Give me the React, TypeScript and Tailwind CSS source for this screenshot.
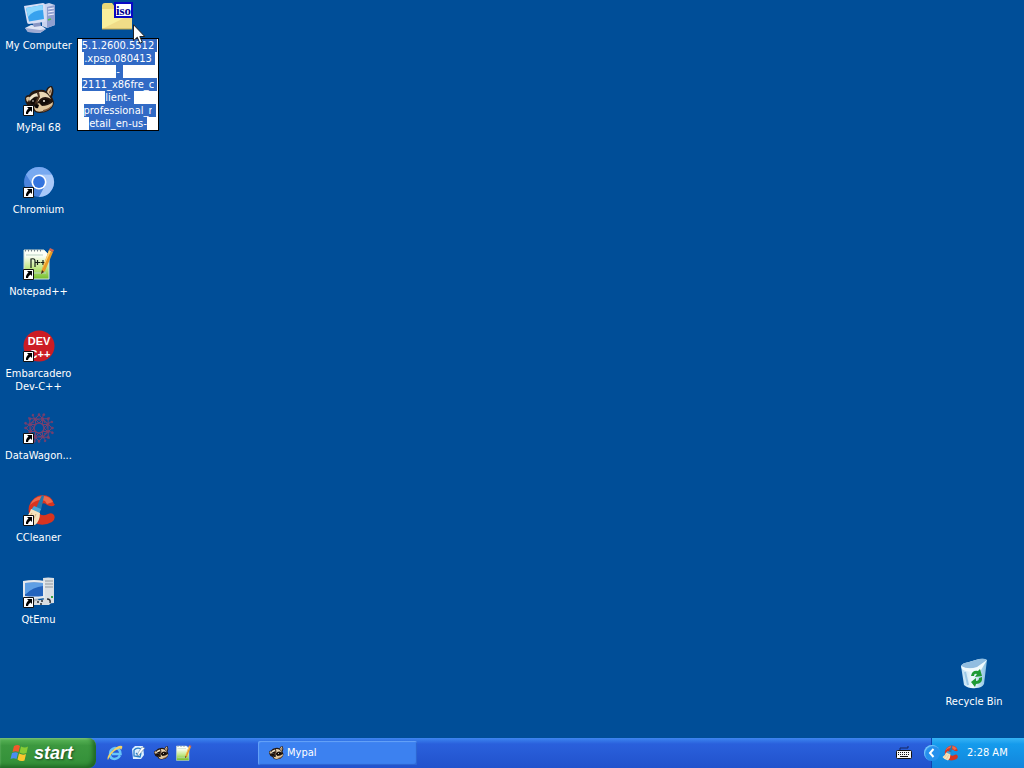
import { useEffect, useRef, type ReactNode } from 'react';

function ComputerIcon() {
  return (
    <svg viewBox="0 0 32 32" className="size-8" aria-hidden="true">
      <path d="M19 3 26 1l6 2v20l-8 3-5-2z" fill="#c9d3ee" />
      <path d="M24 5l8-2v20l-8 3z" fill="#8f9fd0" />
      <path d="M25 7l6-1M25 10l6-1M25 13l6-1" stroke="#eef2ff" strokeWidth="1.2" />
      <path d="M25 18l3-1" stroke="#4fbf4f" strokeWidth="1.5" />
      <path d="M2 26l6-3 11 1 4 3-6 4-12-1z" fill="#dfe4f4" />
      <path d="M2 26l15 2 6-1-6 4-12-1z" fill="#9eaad2" />
      <path d="M9 20l8-1 1 5-7 1z" fill="#8795c4" />
      <path d="M1 4 20 1q2 0 2 2l1 15q0 2-2 2L6 22q-2 0-2-2z" fill="#d6def5" />
      <path d="M3 6 19.500 3l1.500 14-15 2.500z" fill="#38a2ee" />
      <path d="M3 6 19.500 3l.6 5Q10 8 5 15z" fill="#8bd7ff" />
    </svg>
  );
}

function RaccoonIcon({ className = 'size-8' }: { className?: string }) {
  return (
    <svg viewBox="0 0 32 32" className={className} aria-hidden="true">
      <path d="M2 15q0-4 4-4 3-5 9-5 5-1 8 1 1-5 6-5 3 5 0 11 3 5 1 9-3 6-13 7-6 0-8-5-6-2-7-8z" fill="#25170f" />
      <path d="M3 14q2-2 4-1l-2 5q-2-1-2-4z" fill="#dcc29c" />
      <path d="M24 8q1-4 4-5 2 4-1 9z" fill="#e2c8a2" />
      <path d="M26 8l2-3q0 3-1 5z" fill="#7d5438" />
      <path d="M6 15q2-5 8-6l2 4q-5-2-9 5z" fill="#efe2c8" />
      <path d="M16 8q6-1 10 4l2 3q-6-4-11 0l-3 4 2-6z" fill="#e9d6b4" />
      <path d="M14 8l2 0 1 5-4 7-1-1 3-6z" fill="#4f3423" />
      <path d="M7 17q3-4 6-2l-2 5q-3 1-4-3zM17 17q5-4 10 0-3 4-9 4z" fill="#120b07" />
      <circle cx="21" cy="17" r="1" fill="#f7f1e5" />
      <circle cx="10" cy="17" r=".8" fill="#f7f1e5" />
      <path d="M12 21l4-2 3 3q6 0 11-4 0 6-7 8-6 3-10 1-3-3-1-6z" fill="#e0c69d" />
      <path d="M11 21q3-2 5 0l-1 3q-3 1-4-3z" fill="#0d0806" />
      <path d="M20 26q6-1 9-5-1 5-9 7z" fill="#80593b" />
    </svg>
  );
}

function ChromiumIcon() {
  return (
    <svg viewBox="0 0 32 32" className="size-8" aria-hidden="true">
      <circle cx="16" cy="16" r="15" fill="#4a83dc" />
      <path d="M3 8.500A15 15 0 0 1 29 8.500L16 9 10 19.500z" fill="#78a9f0" />
      <path d="M29 8.500A15 15 0 0 1 16 31l6-11.500L16 8.500z" fill="#a9c9f9" />
      <circle cx="16" cy="16" r="7.500" fill="#fff" />
      <circle cx="16" cy="16" r="5.900" fill="#3474de" />
    </svg>
  );
}

function NotepadIcon({ className = 'size-8', plain = false }: { className?: string; plain?: boolean }) {
  return (
    <svg viewBox="0 0 32 32" className={className} aria-hidden="true">
      <defs>
        <linearGradient id="paper" x1="0" y1="0" x2="0" y2="1">
          <stop offset=".2" stopColor="#fcfff7" />
          <stop offset=".6" stopColor="#c4e98a" />
          <stop offset="1" stopColor="#73bd2b" />
        </linearGradient>
      </defs>
      <path d="M1 2h20l5 5v24H1z" fill="url(#paper)" stroke="#d3e2dc" />
      <path d="M2 2.500h18" stroke="#75818b" strokeWidth="2" strokeDasharray="1 2" />
      <path d="M3 7h17M3 25h20" stroke="#b9d3c1" />
      {!plain && (
        <path d="M8 20v-9q4-1 4 2v6M12 14.500h5M14.500 12v5M17.500 14.500h5M20 12v5" stroke="#17201a" strokeWidth="1.200" fill="none" />
      )}
      <path d="M26 2l4 2-8 19-4 3 1-5z" fill="#e99b25" />
      <path d="M26 2l2 1-9 19z" fill="#ffd67a" />
      <path d="M26 2l1-2 4 2-1 2z" fill="#d9634e" />
      <path d="M19 22l-1 4 3-2z" fill="#3b2c20" />
    </svg>
  );
}

function DevIcon() {
  return (
    <svg viewBox="0 0 32 32" className="size-8" aria-hidden="true">
      <circle cx="16" cy="16" r="15.500" fill="#cc1c24" />
      <g fontFamily="Liberation Sans, sans-serif" fontWeight="700" fontSize="11" fill="#fff" textAnchor="middle">
        <text x="16" y="15">DEV</text>
        <text x="17" y="28">C++</text>
      </g>
    </svg>
  );
}

const spokes = [0, 45, 90, 135, 180, 225, 270, 315];

function DataWagonIcon() {
  return (
    <svg viewBox="0 0 32 32" className="size-8" aria-hidden="true">
      <g fill="none" stroke="#75406f" strokeWidth="1">
        <circle cx="16" cy="16" r="5" strokeWidth="1.500" />
        {spokes.map((angle) => (
          <g key={angle} transform={`rotate(${angle} 16 16)`}>
            <path d="M16 11l-4-4 4-4 4 4zM12 7 9 3M16 3v-2M12 7h8M20 7l2 4" />
            <circle cx="16" cy="3" r="1" fill="#853a61" />
            <circle cx="12" cy="7" r="1" fill="#853a61" />
            <circle cx="10" cy="3" r=".8" fill="#853a61" />
          </g>
        ))}
      </g>
    </svg>
  );
}

function CCleanerIcon({ className = 'size-8' }: { className?: string }) {
  return (
    <svg viewBox="0 0 32 32" className={className} aria-hidden="true">
      <path d="M31 10Q29 1 19 1 10 2 6 12q-2 11 6 17 8 4 17-1 4-3 2-7-2-3-6-1-6 3-9-1-3-6 2-9 4-2 6 1 7 3 8-1z" fill="#d8341f" />
      <path d="M30 8Q26 1 19 2 10 3 7 11q8-7 15-4l2 3z" fill="#ec6a4c" />
      <path d="M19 1l2 1-3 14-5-2z" fill="#2478ac" />
      <path d="M11 12l7 3-2 5-8-4z" fill="#4aa5d4" />
      <path d="M8 15l9 4q0 8-5 12Q5 30 1 24q5-2 7-9z" fill="#f4e3be" />
      <path d="M9 19 5 25M13 20l-4 8" stroke="#d8b57c" />
    </svg>
  );
}

function QtEmuIcon() {
  return (
    <svg viewBox="0 0 32 32" className="size-8" aria-hidden="true">
      <g transform="translate(0 1)">
        <path d="M20 1q5-1 11 0v25l-10 1z" fill="#dadfe3" />
        <path d="M22 4h8M22 7h8M22 10h8" stroke="#91999f" />
        <path d="M28 20h2" stroke="#38a646" strokeWidth="2" />
        <path d="M0 4q11-2 22 0v17q-11 2-22 0z" fill="#e5e9ed" />
        <path d="M2 6q9-1 18 0v13q-9 1-18 0z" fill="#2363bd" />
        <path d="M2 6q9-1 18 0v3Q10 10 3 17H2z" fill="#5f9fe4" />
        <path d="M8 22h7l2 4H6z" fill="#a4adb7" />
        <path d="M12 24l12-2 5 3-3 3H10z" fill="#d9dde0" />
        <path d="M14 25h2m2-1h2m-3 3h2M24 22q4 0 3 4" stroke="#292d32" strokeWidth="1.500" fill="none" />
      </g>
    </svg>
  );
}

function RecycleIcon() {
  return (
    <svg viewBox="0 0 32 32" className="size-8" aria-hidden="true">
      <defs>
        <linearGradient id="bin">
          <stop stopColor="#b9dcf3" />
          <stop offset=".45" stopColor="#f0fafd" />
          <stop offset="1" stopColor="#83bde1" />
        </linearGradient>
      </defs>
      <path d="M3 8Q4 5 11 4l10-3q6-1 8 1l-3 24q-2 4-8 4-7 1-12-3z" fill="url(#bin)" />
      <path d="M3 8q6 4 16 2l10-8q-3-2-8-1L11 4Q4 5 3 8z" fill="#91bde0" />
      <path d="M3 8q7 4 16 1l10-7-6 10Q10 16 4 11z" fill="#f0fafd" />
      <path d="M7 14l3 13" stroke="#9bc8e6" strokeWidth="2" />
      <path d="M13 18q1-6 7-5l2-2 2 7-7 1 2-3q-3-1-3 2zM24 19q1 7-6 7l-1 3-4-5 5-4v3q3 0 3-3z" fill="#1f9a35" />
    </svg>
  );
}

function FolderIcon() {
  return (
    <svg viewBox="0 0 32 32" className="size-8" aria-hidden="true">
      <path d="M0 4q0-3 3-3h7l3 4h17v22H2q-2 0-2-3z" fill="#e8d978" />
      <path d="M0 7h30v20H0z" fill="#f8ef9c" />
      <path d="M0 27 30 12v15z" fill="#f0dc88" />
      <path d="M0 27h30" stroke="#bda752" />
      <rect x="13" y="1" width="17" height="14" fill="#fff" stroke="#0808c4" strokeWidth="2" />
      <text x="21.500" y="13" textAnchor="middle" fontFamily="Liberation Serif, serif" fontWeight="700" fontSize="13" fill="#00008f">iso</text>
    </svg>
  );
}

function ShortcutMark() {
  return (
    <svg viewBox="0 0 11 11" className="absolute bottom-0 left-0 size-[11px]" aria-hidden="true">
      <path d="M.5.500h10v10H.5z" fill="#fff" stroke="#111" />
      <path d="M4 2h5v5L7.500 5.500Q5 7 5 9H3Q2.500 6 5.500 3.500z" fill="#000" />
    </svg>
  );
}

function DesktopItem({ label, shortcut = true, children }: { label: string; shortcut?: boolean; children: ReactNode }) {
  return (
    <button className="flex h-[82px] w-full flex-col items-center gap-[5px] pt-0.5 text-center text-[11px] leading-[13px] text-white">
      <span className="relative block size-8 shrink-0">
        {children}
        {shortcut && <ShortcutMark />}
      </span>
      <span className="block">{label}</span>
    </button>
  );
}

const fileName = '5.1.2600.5512\n.xpsp.080413\n-\n2111_x86fre_c\nlient-\nprofessional_r\netail_en-us-';

function RenamingItem() {
  const field = useRef<HTMLTextAreaElement>(null);
  useEffect(() => {
    field.current?.focus();
    field.current?.select();
  }, []);
  return (
    <div className="relative flex w-[82px] flex-col items-center gap-1 pt-0.5">
      <FolderIcon />
      <textarea
        ref={field}
        aria-label="File name"
        rows={7}
        defaultValue={fileName}
        spellCheck={false}
        className="block w-full resize-none overflow-hidden whitespace-pre border border-black bg-white text-center text-[11px] leading-[13px] text-black outline-none selection:bg-[#316ac5] selection:text-white"
      />
      <svg viewBox="0 0 12 20" className="absolute left-14 top-6 h-5 w-3" aria-hidden="true">
        <path d="M.5.700v16l3.800-3.500 2.500 6 2.500-1-2.500-5.700h5z" fill="#fff" stroke="#222" />
      </svg>
    </div>
  );
}

function StartFlag() {
  return (
    <svg viewBox="0 0 20 20" className="size-5" aria-hidden="true">
      <path d="M4 3q4-2 6 0L8.500 9q-3-1.500-6 0z" fill="#f2592b" />
      <path d="M11 3.500q4 2 7 0L16.500 10q-4 1.500-7-.5z" fill="#87cc35" />
      <path d="M2 10q4-1.500 6 0l-1.500 6q-3-1.500-6 0z" fill="#4b8df1" />
      <path d="M9 10.500q4 2 7 .5l-1.500 6.500q-4 1.500-7-1z" fill="#fac72e" />
    </svg>
  );
}

function ExplorerIcon() {
  return (
    <svg viewBox="0 0 16 16" className="size-4" aria-hidden="true">
      <path d="M13 10.500Q11 14 7.500 14 3 14 3 9t5-6q5 0 5.500 6H5" fill="none" stroke="#67c5fa" strokeWidth="2.500" />
      <path d="M1 15Q-1 12 5 6T15 1q1 1-1 4 0-3-5 0T1 15z" fill="#f3d264" />
    </svg>
  );
}

function ShowDesktopIcon() {
  return (
    <svg viewBox="0 0 16 16" className="size-4" aria-hidden="true">
      <path d="M2 4 5 1h8l1 9-3 4H3z" fill="#dcefff" />
      <path d="M4 5q3-3 7-1M4 5v6l6 1 1-4M6 8l2 2 6-7" stroke="#277fc9" strokeWidth="1.300" fill="none" />
      <path d="M12 2l3 1-6 7-2 1 1-3z" fill="#fff" stroke="#57748e" strokeWidth=".5" />
    </svg>
  );
}

function KeyboardIcon() {
  return (
    <svg viewBox="0 0 16 14" className="h-3.5 w-4" aria-hidden="true">
      <path d="M4 4V2h8V0" fill="none" stroke="#17265f" />
      <rect x=".5" y="4.500" width="15" height="8" rx="1" fill="#f8f8f8" stroke="#111" />
      <path d="M2 6.500h12M2 8.500h12" stroke="#111" strokeDasharray="1 1" />
      <path d="M4 10.500h8" stroke="#111" />
    </svg>
  );
}

export default function App() {
  return (
    <div className="flex min-h-screen flex-col bg-[#004e98] font-['Tahoma','DejaVu_Sans_Condensed',sans-serif]">
      <main className="flex flex-1 items-start">
        <div className="flex w-[77px] flex-col">
          <DesktopItem label="My Computer" shortcut={false}><ComputerIcon /></DesktopItem>
          <DesktopItem label="MyPal 68"><RaccoonIcon /></DesktopItem>
          <DesktopItem label="Chromium"><ChromiumIcon /></DesktopItem>
          <DesktopItem label="Notepad++"><NotepadIcon /></DesktopItem>
          <DesktopItem label="Embarcadero Dev-C++"><DevIcon /></DesktopItem>
          <DesktopItem label="DataWagon..."><DataWagonIcon /></DesktopItem>
          <DesktopItem label="CCleaner"><CCleanerIcon /></DesktopItem>
          <DesktopItem label="QtEmu"><QtEmuIcon /></DesktopItem>
        </div>
        <RenamingItem />
        <div className="ml-auto mr-3 w-[76px] self-end">
          <DesktopItem label="Recycle Bin" shortcut={false}><RecycleIcon /></DesktopItem>
        </div>
      </main>
      <footer className="flex h-[30px] items-stretch bg-linear-to-b from-[#3d86f0] from-0% via-[#2a60dc] via-20% to-[#2152cc] text-[11px] text-white">
        <button className="flex w-24 items-center gap-1 rounded-r-lg bg-linear-to-b from-[#5cb85a] from-0% via-[#3c983f] via-25% to-[#338f38] pl-2.5 shadow-[inset_-3px_-2px_4px_#1d6522,inset_0_1px_2px_#8bd088]">
          <StartFlag />
          <span className="font-['Liberation_Sans',sans-serif] text-lg leading-5 font-bold italic [text-shadow:1px_1px_2px_#1d4b20]">start</span>
        </button>
        <nav aria-label="Quick launch" className="flex w-[162px] items-center gap-[7px] pl-[11px]">
          <button aria-label="Internet Explorer"><ExplorerIcon /></button>
          <button aria-label="Show Desktop"><ShowDesktopIcon /></button>
          <button aria-label="MyPal 68"><RaccoonIcon className="size-4" /></button>
          <button aria-label="Notepad++"><NotepadIcon className="size-4" plain /></button>
        </nav>
        <button className="my-[3px] flex w-[159px] items-center gap-[3px] rounded-xs bg-[#3c81f0] pl-2.5 shadow-[inset_1px_1px_1px_#66a3f8,inset_-1px_-1px_1px_#2c63d0]">
          <RaccoonIcon className="size-4" />
          <span>Mypal</span>
        </button>
        <div className="ml-auto flex items-stretch">
          <button aria-label="On-screen keyboard" className="flex w-[35px] items-center"><KeyboardIcon /></button>
          <div className="flex w-[93px] items-center border-l border-[#1042af] bg-linear-to-b from-[#35b4f5] from-0% via-[#159bec] via-20% to-[#1285dc]">
            <button aria-label="Show hidden icons" className="-ml-2 flex size-4 items-center justify-center rounded-full bg-[#2590ec] shadow-[inset_1px_1px_1px_#7dc8fb]">
              <svg viewBox="0 0 16 16" className="size-4" aria-hidden="true">
                <path d="M9.500 4 6 8l3.500 4" fill="none" stroke="#fff" strokeWidth="2" />
              </svg>
            </button>
            <button aria-label="CCleaner" className="ml-0.5"><CCleanerIcon className="size-4" /></button>
            <time className="ml-[9px] whitespace-nowrap">2:28 AM</time>
          </div>
        </div>
      </footer>
    </div>
  );
}
